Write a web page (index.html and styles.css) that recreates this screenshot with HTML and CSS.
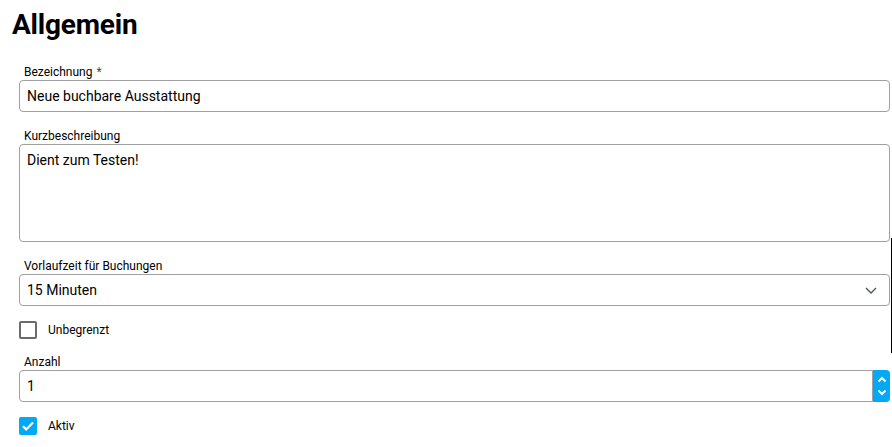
FILE: index.html
```html
<!DOCTYPE html>
<html lang="de">
<head>
<meta charset="utf-8">
<title>Allgemein</title>
<link rel="stylesheet" href="styles.css">
</head>
<body>
<div class="page">
  <h1 class="title">Allgemein</h1>
  <form class="form">
    <div class="field">
      <label class="label">Bezeichnung <span class="req">*</span></label>
      <div class="box input">Neue buchbare Ausstattung</div>
    </div>
    <div class="field">
      <label class="label">Kurzbeschreibung</label>
      <div class="box textarea">Dient zum Testen!</div>
    </div>
    <div class="field">
      <label class="label">Vorlaufzeit für Buchungen</label>
      <div class="box input select">
        <span>15 Minuten</span>
        <svg class="chev" width="12" height="7" viewBox="0 0 12 7"><path d="M1 1l5 5 5-5" fill="none" stroke="#4b5563" stroke-width="1.4"/></svg>
      </div>
    </div>
    <div class="check">
      <span class="cb"></span>
      <span class="cb-label">Unbegrenzt</span>
    </div>
    <div class="field">
      <label class="label">Anzahl</label>
      <div class="number">
        <div class="box input num">1</div>
        <div class="spin">
          <svg width="10" height="7" viewBox="0 0 10 7"><path d="M1.5 5.5L5 2l3.5 3.5" fill="none" stroke="#fff" stroke-width="2"/></svg>
          <svg width="10" height="7" viewBox="0 0 10 7"><path d="M1.5 1.5L5 5l3.5-3.5" fill="none" stroke="#fff" stroke-width="2"/></svg>
        </div>
      </div>
    </div>
    <div class="check">
      <span class="cb on">
        <svg width="14" height="12" viewBox="0 0 14 12"><path d="M2 6.2l3.2 3.2L12 2.5" fill="none" stroke="#fff" stroke-width="2.2"/></svg>
      </span>
      <span class="cb-label">Aktiv</span>
    </div>
  </form>
  <div class="edge"></div>
</div>
</body>
</html>
```
FILE: styles.css
```css
html, body {
  margin: 0;
  padding: 0;
  background: #fff;
}
body {
  font-family: Roboto, "Liberation Sans", Arial, sans-serif;
  color: #000;
}
.page {
  position: relative;
  padding: 0 2px 0 12px;
}
.title {
  margin: 0;
  padding-top: 8px;
  font-size: 28px;
  font-weight: 700;
  line-height: 34px;
  letter-spacing: -0.2px;
}
.form {
  display: flex;
  flex-direction: column;
  padding: 22px 0 0 7px;
}
.field {
  display: flex;
  flex-direction: column;
}
.field + .field {
  margin-top: 16px;
}
.label {
  display: block;
  font-size: 12px;
  line-height: 16px;
  padding-left: 5px;
}
.req {
  color: #1f5a45;
  margin-left: 1px;
}
.box {
  box-sizing: border-box;
  border: 1px solid #a0a0a0;
  border-radius: 4px;
  background: #fff;
  font-size: 14px;
  padding: 0 7px;
}
.input {
  height: 32px;
  line-height: 30px;
}
.textarea {
  height: 98px;
  padding-top: 5px;
  line-height: 20px;
}
.select {
  display: flex;
  align-items: center;
  justify-content: space-between;
  padding-right: 12px;
}
.chev {
  display: block;
}
.check {
  display: flex;
  align-items: center;
  gap: 11px;
  margin: 15px 0;
  height: 18px;
}
.cb {
  box-sizing: border-box;
  width: 18px;
  height: 18px;
  border: 2px solid #6b6b6b;
  border-radius: 2px;
  display: flex;
  align-items: center;
  justify-content: center;
}
.cb.on {
  background: #03a9f4;
  border-color: #03a9f4;
}
.cb-label {
  font-size: 12px;
  line-height: 16px;
}
.number {
  display: flex;
  height: 32px;
}
.num {
  flex: 1;
  border-radius: 4px 0 0 4px;
}
.spin {
  width: 17px;
  background: #03a9f4;
  border-radius: 0 4px 4px 0;
  display: flex;
  flex-direction: column;
  align-items: center;
  justify-content: space-around;
  padding: 3px 0;
  box-sizing: border-box;
}
.spin svg {
  display: block;
}
.edge {
  position: absolute;
  right: 0;
  top: 238px;
  width: 1px;
  height: 115px;
  background: #000;
}
```
